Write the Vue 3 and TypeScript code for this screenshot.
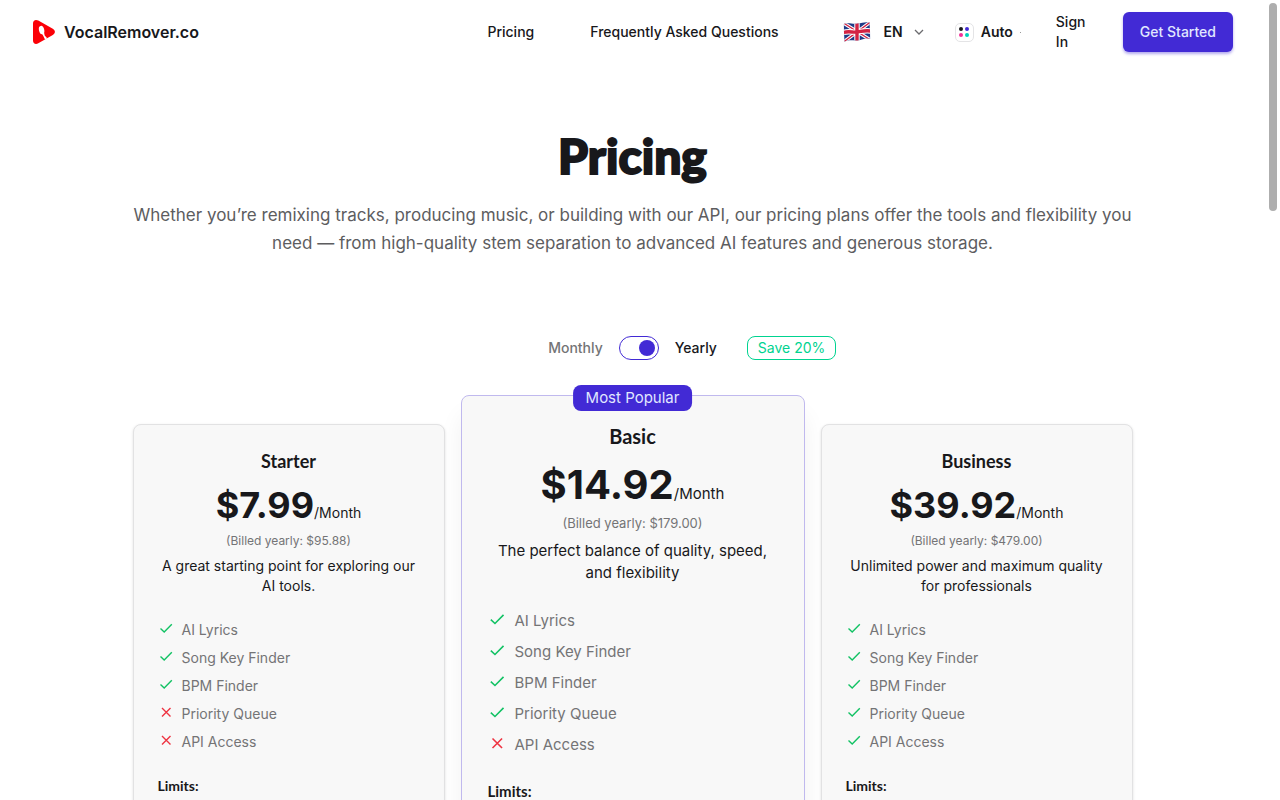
<script setup lang="ts">
import { ref } from 'vue'

interface Feature {
  name: string
  included: boolean
}

interface Plan {
  name: string
  price: string
  billed: string
  description: string
  features: Feature[]
  popular: boolean
}

const featureNames = ['AI Lyrics', 'Song Key Finder', 'BPM Finder', 'Priority Queue', 'API Access']
const featuresUpTo = (count: number): Feature[] =>
  featureNames.map((name, index) => ({ name, included: index < count }))

const yearly = ref(true)

const plans: Plan[] = [
  {
    name: 'Starter',
    price: '$7.99',
    billed: '(Billed yearly: $95.88)',
    description: 'A great starting point for exploring our AI tools.',
    features: featuresUpTo(3),
    popular: false,
  },
  {
    name: 'Basic',
    price: '$14.92',
    billed: '(Billed yearly: $179.00)',
    description: 'The perfect balance of quality, speed, and flexibility',
    features: featuresUpTo(4),
    popular: true,
  },
  {
    name: 'Business',
    price: '$39.92',
    billed: '(Billed yearly: $479.00)',
    description: 'Unlimited power and maximum quality for professionals',
    features: featuresUpTo(5),
    popular: false,
  },
]
</script>

<template>
  <div class="page">
    <header class="navbar">
      <a class="brand" href="#">
        <svg class="brand-mark" viewBox="0 0 24 26" aria-hidden="true">
          <path d="M1 4.5C1 1.3 3.6 0.2 6.3 1.6L20.8 9.8C23.6 11.4 23.6 14.4 20.8 16L6.3 24.3C3.6 25.7 1 24.6 1 21.5Z" fill="#fb0007" />
          <ellipse cx="9.6" cy="11" rx="2.6" ry="4.2" transform="rotate(-14 9.6 11)" fill="#fff" />
          <path d="M9.4 14L12 13.2L12.7 16.6L15.2 19.2L13 20.6L11.2 16.8Z" fill="#fff" />
        </svg>
        <span>VocalRemover.co</span>
      </a>
      <nav class="links">
        <a href="#pricing">Pricing</a>
        <a href="#faq">Frequently Asked Questions</a>
      </nav>
      <button class="menu language" type="button">
        <svg class="flag" viewBox="0 0 27 20" aria-hidden="true">
          <defs>
            <clipPath id="flag-wave">
              <path d="M0 2C5 -0.2 9 2.6 14 1.6C19 0.8 22 -0.6 26 0.6L27 17C22 15.6 19 18 14 18.4C9 18.8 6 17.4 1 19.6Z" />
            </clipPath>
          </defs>
          <g clip-path="url(#flag-wave)">
            <rect width="27" height="20" fill="#1f3a86" />
            <path d="M0 1L27 18M0 20L27 0" stroke="#fff" stroke-width="3.4" />
            <path d="M0 1L27 18M0 20L27 0" stroke="#d32343" stroke-width="1.4" />
            <path d="M13.5 0V20M0 10.5C6 8.6 9 10.8 14 10C19 9.2 22 8 27 9" fill="none" stroke="#fff" stroke-width="5.4" />
            <path d="M13.5 0V20M0 10.5C6 8.6 9 10.8 14 10C19 9.2 22 8 27 9" fill="none" stroke="#d32343" stroke-width="3.4" />
          </g>
        </svg>
        <span>EN</span>
        <svg class="chevron" viewBox="0 0 10 6" aria-hidden="true">
          <path d="M1 1L5 5L9 1" fill="none" stroke="#6b6b6f" stroke-width="1.3" />
        </svg>
      </button>
      <button class="menu theme" type="button">
        <span class="swatch" aria-hidden="true">
          <i class="dot dark"></i><i class="dot violet"></i>
          <i class="dot pink"></i><i class="dot teal"></i>
        </span>
        <span>Auto</span>
        <i class="caret" aria-hidden="true"></i>
      </button>
      <a class="sign-in" href="#sign-in">Sign In</a>
      <button class="cta" type="button">Get Started</button>
    </header>

    <main id="pricing" class="content">
      <h1>Pricing</h1>
      <p class="lead">
        Whether you’re remixing tracks, producing music, or building with our API, our pricing plans offer the
        tools and flexibility you need — from high-quality stem separation to advanced AI features and generous
        storage.
      </p>

      <div class="billing">
        <label for="billing-period" class="muted">Monthly</label>
        <input id="billing-period" v-model="yearly" class="toggle" type="checkbox" />
        <label for="billing-period">Yearly</label>
        <span class="saving">Save 20%</span>
      </div>

      <section class="plans">
        <article v-for="plan in plans" :key="plan.name" class="plan" :class="{ popular: plan.popular }">
          <span v-if="plan.popular" class="ribbon">Most Popular</span>
          <h2>{{ plan.name }}</h2>
          <p class="price"><strong>{{ plan.price }}</strong><span>/Month</span></p>
          <p class="billed">{{ plan.billed }}</p>
          <p class="description">{{ plan.description }}</p>
          <ul class="features">
            <li v-for="feature in plan.features" :key="feature.name">
              <svg class="mark" viewBox="0 0 16 16" aria-hidden="true">
                <path v-if="feature.included" d="M2.5 8.5L6.2 12L13.8 4.3" stroke="#12c264" />
                <path v-else d="M4 4L12.5 12.5M12.5 4L4 12.5" stroke="#ee3341" />
              </svg>
              <span>{{ feature.name }}</span>
            </li>
          </ul>
          <h3>Limits:</h3>
        </article>
      </section>
    </main>
    <div class="scroll-thumb" aria-hidden="true"></div>
  </div>
</template>

<style>
body {
  margin: 0;
  background: #fff;
}
</style>

<style scoped>
.page {
  box-sizing: border-box;
  height: 100vh;
  padding-right: 15px;
  overflow: hidden auto;
  scrollbar-width: none;
  color: #18181b;
  font: 14px/20px Inter, "Liberation Sans", sans-serif;
}

h1,
h2,
h3,
p,
ul {
  margin: 0;
  padding: 0;
}

a {
  color: inherit;
  text-decoration: none;
}

button {
  border: 0;
  padding: 0;
  background: none;
  color: inherit;
  font: inherit;
  cursor: pointer;
}

.navbar {
  display: flex;
  align-items: center;
  height: 64px;
  padding: 0 32px;
}

.brand {
  display: flex;
  align-items: center;
  gap: 8px;
  margin-right: auto;
  font-size: 16px;
  font-weight: 600;
}

.brand-mark {
  width: 24px;
  height: 26px;
}

.links {
  display: flex;
  gap: 56px;
  margin-right: 64px;
  font-weight: 500;
}

.menu {
  display: flex;
  align-items: center;
  font-weight: 600;
}

.language {
  gap: 11px;
  margin-right: 31px;
}

.flag {
  width: 28px;
  height: 20px;
  margin-right: 2px;
}

.chevron {
  width: 10px;
  height: 6px;
}

.theme {
  gap: 7px;
  margin-right: 35px;
}

.swatch {
  box-sizing: border-box;
  display: grid;
  grid-template-columns: 4px 4px;
  gap: 2px;
  place-content: center;
  width: 19px;
  height: 19px;
  border: 1px solid #e4e4e6;
  border-radius: 5px;
}

.dot {
  width: 4px;
  height: 4px;
  border-radius: 50%;
}

.dark { background: #18181b; }
.violet { background: #422ad5; }
.pink { background: #f43098; }
.teal { background: #00d3bb; }

.caret {
  width: 1px;
  height: 1px;
  background: #999;
}

.sign-in {
  width: 32px;
  margin-right: 35px;
  font-weight: 500;
}

.cta {
  height: 40px;
  padding: 0 17px;
  border-radius: 6px;
  background: #422ad5;
  box-shadow: 0 2px 3px rgba(66, 42, 213, 0.4);
  color: #e0e7ff;
  font-weight: 500;
}

.content {
  max-width: 1000px;
  margin: 0 auto;
  padding: 68px 16px 0;
  text-align: center;
}

h1 {
  font: 900 48px/48px Lato, Inter, sans-serif;
  -webkit-text-stroke: 2px currentColor;
}

.lead {
  margin: 21px -8px 0;
  color: #5d5d5f;
  font-size: 17px;
  line-height: 28px;
}

.billing {
  position: relative;
  display: flex;
  align-items: center;
  gap: 16px;
  width: fit-content;
  height: 24px;
  margin: 79px auto 0;
  font-weight: 500;
}

.muted {
  color: #747476;
}

.toggle {
  appearance: none;
  box-sizing: border-box;
  width: 40px;
  height: 24px;
  margin: 0;
  padding: 3px;
  border: 1px solid #422ad5;
  border-radius: 12px;
  cursor: pointer;
}

.toggle::before {
  content: "";
  display: block;
  width: 16px;
  height: 16px;
  border-radius: 50%;
  background: #422ad5;
}

.toggle:checked::before {
  margin-left: auto;
}

.saving {
  position: absolute;
  left: 100%;
  box-sizing: border-box;
  height: 24px;
  margin-left: 30px;
  padding: 1px 10px;
  border: 1px solid #00d390;
  border-radius: 8px;
  color: #00d390;
  font-weight: 400;
  white-space: nowrap;
}

.plans {
  display: grid;
  grid-template-columns: 312fr 344fr 312fr;
  gap: 16px;
  margin-top: 35px;
}

.plan {
  position: relative;
  margin-top: 29px;
  padding: 22px 24px 160px;
  border: 1px solid #e2e2e3;
  border-radius: 8px;
  background: #f8f8f8;
  box-shadow: 0 1px 3px rgba(0, 0, 0, 0.12);
}

h2 {
  font: 700 18px/28px Lato, Inter, sans-serif;
}

.price {
  display: flex;
  align-items: baseline;
  justify-content: center;
  margin-top: 10px;
}

.price strong {
  font-size: 36px;
  font-weight: 700;
  line-height: 40px;
}

.billed {
  margin-top: 8px;
  color: #747476;
  font-size: 12px;
  line-height: 16px;
}

.description {
  margin-top: 7px;
}

.features {
  display: grid;
  gap: 8px;
  margin-top: 24px;
  color: #747476;
  list-style: none;
  text-align: left;
}

.features li {
  display: flex;
  gap: 8px;
}

.mark {
  width: 16px;
  height: 16px;
  fill: none;
  stroke-width: 1.4;
}

h3 {
  margin-top: 24px;
  font: 700 14px/20px Lato, Inter, sans-serif;
  text-align: left;
}

.popular {
  margin-top: 0;
  padding: 25px 26px 160px;
  border-color: #c0b9ee;
  box-shadow: 0 20px 25px rgba(0, 0, 0, 0.06);
  font-size: 15px;
  line-height: 22px;
}

.ribbon {
  position: absolute;
  top: -11px;
  left: 50%;
  padding: 2px 13px;
  border-radius: 8px;
  background: #422ad5;
  color: #e0e7ff;
  white-space: nowrap;
  transform: translateX(-50%);
}

.popular h2 {
  font-size: 20px;
  line-height: 30px;
}

.popular .price {
  margin-top: 12px;
}

.popular .price strong {
  font-size: 40px;
  line-height: 44px;
}

.popular .billed {
  margin-top: 7px;
  font-size: 13px;
  line-height: 18px;
}

.popular .description {
  margin-top: 8px;
}

.popular .features {
  gap: 9px;
  margin-top: 26px;
}

.popular .features li {
  gap: 9px;
}

.popular .mark {
  width: 18px;
  height: 18px;
}

.popular h3 {
  font-size: 15px;
  line-height: 22px;
}

.scroll-thumb {
  position: fixed;
  top: 3px;
  right: 3px;
  width: 8px;
  height: 26vh;
  border-radius: 4px;
  background: #aeaeae;
}
</style>
